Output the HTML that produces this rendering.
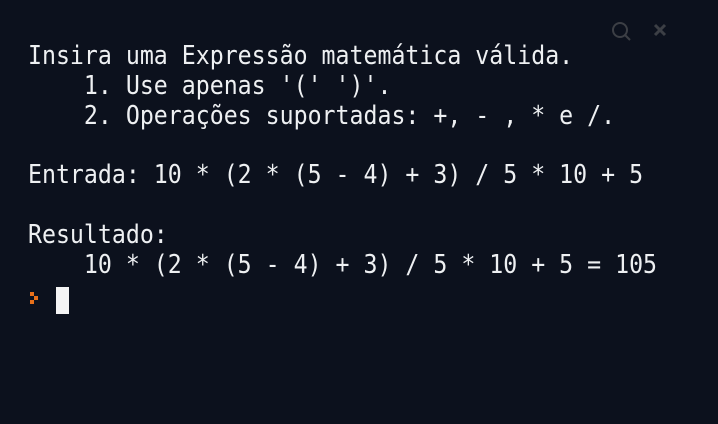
<!DOCTYPE html>
<html><head><meta charset="utf-8"><style>
html,body{margin:0;padding:0;width:718px;height:424px;background:#0c111d;overflow:hidden}
pre{position:absolute;left:28px;top:42px;margin:0;font-family:"DejaVu Sans Mono","Liberation Mono",monospace;font-size:26px;line-height:29.8px;color:#eef0f2;transform:scaleX(0.893);transform-origin:left top}
.c{position:absolute;left:56px;top:287px;width:13px;height:27px;background:#f4f4f4}
</style></head><body>
<svg style="position:absolute;left:610px;top:20px" width="60" height="24">
<circle cx="10" cy="10" r="7" fill="none" stroke="#3c3f45" stroke-width="2"/>
<line x1="15" y1="15" x2="20" y2="20" stroke="#3c3f45" stroke-width="2"/>
<path d="M45 5 L55 15 M55 5 L45 15" stroke="#3c3f45" stroke-width="3"/>
</svg>
<pre>Insira uma Expressão matemática válida.
    1. Use apenas '(' ')'.
    2. Operações suportadas: +, - , * e /.

Entrada: 10 * (2 * (5 - 4) + 3) / 5 * 10 + 5

Resultado:
    10 * (2 * (5 - 4) + 3) / 5 * 10 + 5 = 105</pre>
<svg style="position:absolute;left:30px;top:292px" width="10" height="12">
<rect x="0" y="0" width="4" height="4" fill="#e8701a"/>
<rect x="4" y="4" width="4" height="4" fill="#e8701a"/>
<rect x="0" y="8" width="4" height="4" fill="#e8701a"/>
</svg>
<div class="c"></div>
</body></html>
